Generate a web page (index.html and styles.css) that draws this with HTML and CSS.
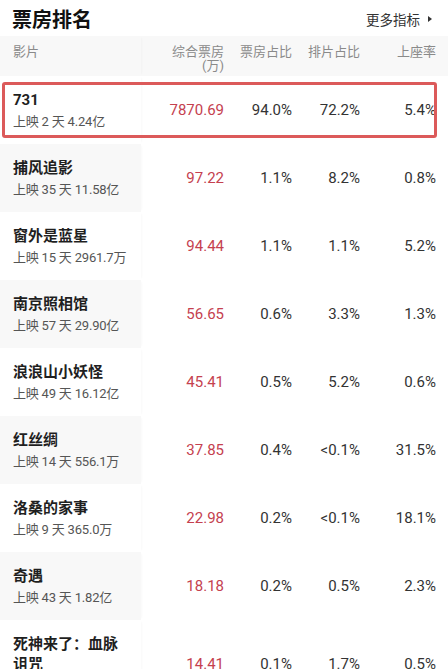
FILE: index.html
```html
<!DOCTYPE html>
<html lang="zh-CN">
<head>
<meta charset="utf-8">
<title>票房排名</title>
<link rel="stylesheet" href="styles.css">
</head>
<body>
<div class="page">
  <div class="titlebar">
    <h1 class="title">票房排名</h1>
    <div class="more">更多指标<span class="tri"></span></div>
  </div>
  <div class="table">
    <div class="row head">
      <div class="cell name-cell"><span class="hlabel">影片</span></div>
      <div class="cell num"><span class="hlabel">综合票房<br>(万)</span></div>
      <div class="cell num"><span class="hlabel">票房占比</span></div>
      <div class="cell num"><span class="hlabel">排片占比</span></div>
      <div class="cell num"><span class="hlabel">上座率</span></div>
      <div class="cell extra"><span class="hlabel">分账票房</span></div>
    </div>

    <div class="row first">
      <div class="cell name-cell"><div class="name">731</div><div class="sub">上映 2 天 4.24亿</div></div>
      <div class="cell num red">7870.69</div>
      <div class="cell num">94.0%</div>
      <div class="cell num">72.2%</div>
      <div class="cell num">5.4%</div>
      <div class="cell extra"></div>
      <div class="highlight"></div>
    </div>

    <div class="row alt">
      <div class="cell name-cell"><div class="name">捕风追影</div><div class="sub">上映 35 天 11.58亿</div></div>
      <div class="cell num red">97.22</div>
      <div class="cell num">1.1%</div>
      <div class="cell num">8.2%</div>
      <div class="cell num">0.8%</div>
      <div class="cell extra"></div>
    </div>

    <div class="row">
      <div class="cell name-cell"><div class="name">窗外是蓝星</div><div class="sub">上映 15 天 2961.7万</div></div>
      <div class="cell num red">94.44</div>
      <div class="cell num">1.1%</div>
      <div class="cell num">1.1%</div>
      <div class="cell num">5.2%</div>
      <div class="cell extra"></div>
    </div>

    <div class="row alt">
      <div class="cell name-cell"><div class="name">南京照相馆</div><div class="sub">上映 57 天 29.90亿</div></div>
      <div class="cell num red">56.65</div>
      <div class="cell num">0.6%</div>
      <div class="cell num">3.3%</div>
      <div class="cell num">1.3%</div>
      <div class="cell extra"></div>
    </div>

    <div class="row">
      <div class="cell name-cell"><div class="name">浪浪山小妖怪</div><div class="sub">上映 49 天 16.12亿</div></div>
      <div class="cell num red">45.41</div>
      <div class="cell num">0.5%</div>
      <div class="cell num">5.2%</div>
      <div class="cell num">0.6%</div>
      <div class="cell extra"></div>
    </div>

    <div class="row alt">
      <div class="cell name-cell"><div class="name">红丝绸</div><div class="sub">上映 14 天 556.1万</div></div>
      <div class="cell num red">37.85</div>
      <div class="cell num">0.4%</div>
      <div class="cell num">&lt;0.1%</div>
      <div class="cell num">31.5%</div>
      <div class="cell extra"></div>
    </div>

    <div class="row">
      <div class="cell name-cell"><div class="name">洛桑的家事</div><div class="sub">上映 9 天 365.0万</div></div>
      <div class="cell num red">22.98</div>
      <div class="cell num">0.2%</div>
      <div class="cell num">&lt;0.1%</div>
      <div class="cell num">18.1%</div>
      <div class="cell extra"></div>
    </div>

    <div class="row alt">
      <div class="cell name-cell"><div class="name">奇遇</div><div class="sub">上映 43 天 1.82亿</div></div>
      <div class="cell num red">18.18</div>
      <div class="cell num">0.2%</div>
      <div class="cell num">0.5%</div>
      <div class="cell num">2.3%</div>
      <div class="cell extra"></div>
    </div>

    <div class="row">
      <div class="cell name-cell"><div class="name">死神来了：血脉诅咒</div><div class="sub">上映 8 天 1.02亿</div></div>
      <div class="cell num red">14.41</div>
      <div class="cell num">0.1%</div>
      <div class="cell num">1.7%</div>
      <div class="cell num">0.5%</div>
      <div class="cell extra"></div>
    </div>
  </div>
</div>
</body>
</html>
```

FILE: styles.css
```css
html, body {
  margin: 0;
  padding: 0;
  background: #ffffff;
}
body {
  width: 448px;
  height: 669px;
  overflow: hidden;
  font-family: Roboto, "Noto Sans CJK SC", "Noto Sans", sans-serif;
  color: #222;
}
.page {
  width: 448px;
}
.titlebar {
  height: 36px;
  display: flex;
  align-items: center;
  justify-content: space-between;
  padding: 0 16px 0 12px;
  box-sizing: border-box;
}
.title {
  margin: 0;
  font-size: 20px;
  font-weight: 700;
  color: #111;
  line-height: 26px;
  padding-top: 4px;
}
.more {
  font-size: 13.5px;
  color: #333;
  display: flex;
  align-items: center;
  padding-top: 2px;
}
.tri {
  display: inline-block;
  width: 0;
  height: 0;
  margin-left: 8px;
  border-left: 4px solid #333;
  border-top: 3px solid transparent;
  border-bottom: 3px solid transparent;
}
.table {
  position: relative;
}
.row {
  display: grid;
  grid-template-columns: 141px 95px 68px 68px 76px 80px;
  position: relative;
  min-height: 68px;
}
.row.head {
  min-height: 40px;
  background: #f8f8f8;
}
.cell {
  box-sizing: border-box;
}
.name-cell {
  padding: 14px 12px 12px 13px;
  position: relative;
  z-index: 1;
  box-shadow: 2px 0 3px -2px rgba(0, 0, 0, 0.05);
  background: #ffffff;
}
.row.alt .name-cell,
.row.head .name-cell {
  background: #f8f8f8;
}
.head .name-cell {
  padding-top: 9px;
}
.hlabel {
  display: block;
  font-size: 13px;
  line-height: 14px;
  color: #8a8a8a;
}
.head .num {
  padding-top: 9px;
  align-self: start;
}
.head .extra {
  padding: 9px 0 0 4px;
}
.name {
  font-family: Roboto, "Noto Sans CJK SC", sans-serif;
  font-size: 15px;
  line-height: 20px;
  font-weight: 700;
  color: #1f1f1f;
}
.sub {
  margin-top: 3px;
  font-size: 13px;
  line-height: 18px;
  color: #555;
  white-space: nowrap;
  letter-spacing: -0.2px;
}
.num {
  text-align: right;
  padding-right: 12px;
  align-self: center;
  font-size: 15px;
  color: #333;
}
.num.red {
  color: #c5414f;
}
.highlight {
  position: absolute;
  left: 2px;
  top: 6px;
  width: 435px;
  height: 56px;
  box-sizing: border-box;
  border: 3px solid #dc5a5a;
  border-radius: 3px;
  z-index: 2;
  pointer-events: none;
}
```
